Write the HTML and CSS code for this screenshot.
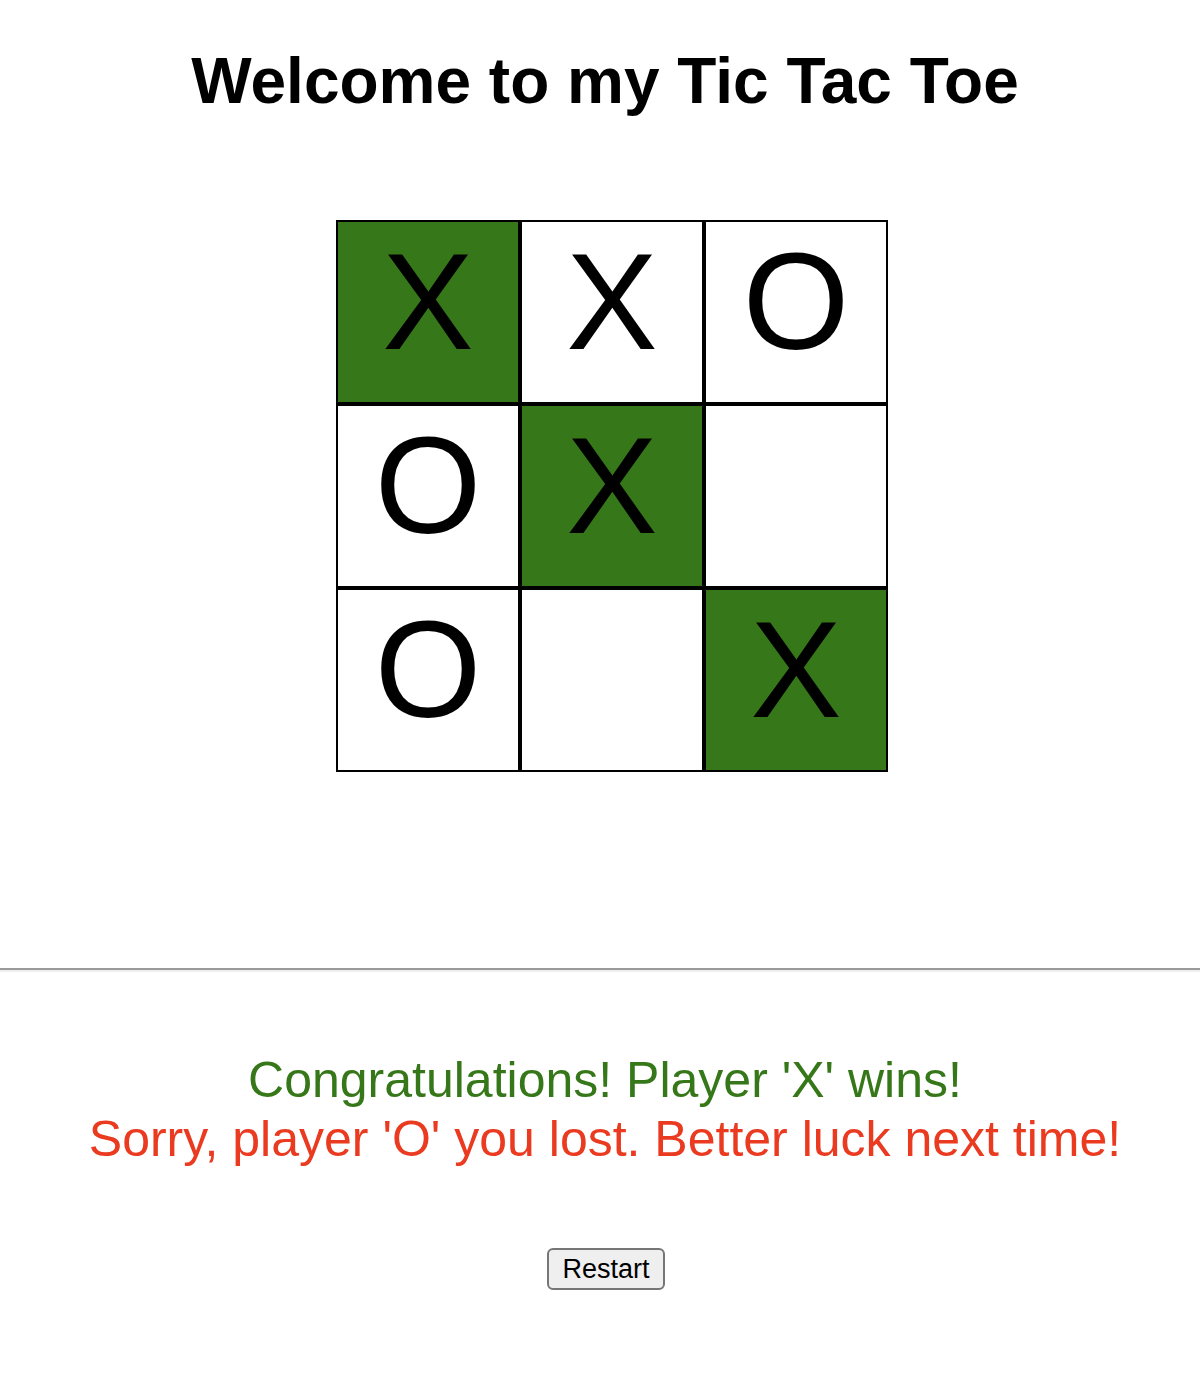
FILE: index.html
```html
<!DOCTYPE html>
<html>
<head>
<meta charset="utf-8">
<title>Tic Tac Toe</title>
<link rel="stylesheet" href="styles.css">
</head>
<body>
  <h1 class="title">Welcome to my Tic Tac Toe</h1>
  <div class="board">
    <div class="cell win">X</div>
    <div class="cell">X</div>
    <div class="cell">O</div>
    <div class="cell">O</div>
    <div class="cell win">X</div>
    <div class="cell"></div>
    <div class="cell">O</div>
    <div class="cell"></div>
    <div class="cell win">X</div>
  </div>
  <hr class="divider">
  <div class="messages">
    <div class="msg msg-win">Congratulations! Player 'X' wins!</div>
    <div class="msg msg-lose">Sorry, player 'O' you lost. Better luck next time!</div>
  </div>
  <div class="actions">
    <button class="restart">Restart</button>
  </div>
</body>
</html>
```

FILE: styles.css
```css
html, body {
  margin: 0;
  padding: 0;
  background: #ffffff;
}
body {
  font-family: "Liberation Sans", Arial, sans-serif;
  color: #000;
}
.title {
  margin: 0;
  padding: 44px 0 0 10px;
  font-size: 64px;
  font-weight: bold;
  line-height: 74px;
  text-align: center;
}
.board {
  margin: 102px 0 0 336px;
  display: grid;
  grid-template-columns: repeat(3, 184px);
  grid-template-rows: repeat(3, 184px);
  width: 552px;
}
.cell {
  box-sizing: border-box;
  border: 2px solid #000;
  background: #fff;
  font-size: 137px;
  line-height: 160px;
  text-align: center;
  overflow: hidden;
}
.cell.win {
  background: #367819;
}
.divider {
  margin: 196px 0 0 0;
  height: 0;
  border: none;
  border-top: 2px solid #9a9a9a;
  border-bottom: 2px solid #eeeeee;
}
.messages {
  margin-top: 79px;
  padding-left: 10px;
  text-align: center;
  font-size: 50px;
  line-height: 59px;
}
.msg-win {
  color: #367819;
}
.msg-lose {
  color: #ea3a1f;
}
.actions {
  margin-top: 79px;
  padding-left: 12px;
  text-align: center;
}
.restart {
  font-family: "Liberation Sans", Arial, sans-serif;
  font-size: 27px;
  line-height: 32px;
  padding: 3px 13px;
  color: #000;
  background: #efefef;
  border: 2px solid #767676;
  border-radius: 6px;
}
```
